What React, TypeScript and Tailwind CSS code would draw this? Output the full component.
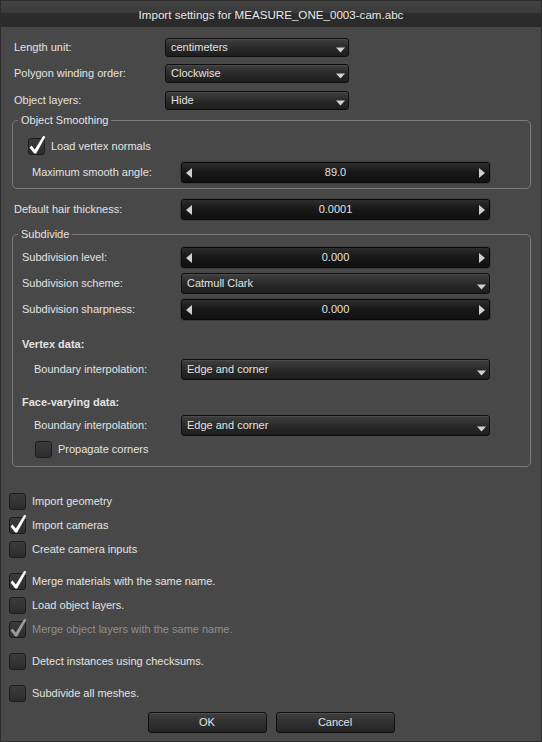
import React from "react";

const TXT = "text-[#e3e3e3]";

function Check({ checked, disabled }: { checked?: boolean; disabled?: boolean }) {
  return (
    <div className="relative w-[17px] h-[17px] shrink-0 rounded-[3px] border border-[#1c1c1c] bg-gradient-to-b from-[#3b3b3b] to-[#2d2d2d]">
      {checked && (
        <svg
          className="absolute left-[-1px] top-[-1px] overflow-visible"
          width="17"
          height="17"
          viewBox="0 0 17 17"
        >
          <path
            d="M1.5 9.5 L3.6 7.6 L6.8 11.6 L15.3 -2.2 L17.4 -1.2 L8.2 15.6 L6.2 15.6 Z"
            fill={disabled ? "#9a9a9a" : "#ffffff"}
          />
        </svg>
      )}
    </div>
  );
}

function CheckRow({
  label,
  checked,
  disabled,
  className = "",
}: {
  label: string;
  checked?: boolean;
  disabled?: boolean;
  className?: string;
}) {
  return (
    <div className={`flex items-center gap-[6px] h-[17px] ${className}`}>
      <Check checked={checked} disabled={disabled} />
      <span className={disabled ? "text-[#8f8f8f]" : TXT}>{label}</span>
    </div>
  );
}

function Dropdown({ value, h = "h-[19px]" }: { value: string; h?: string }) {
  return (
    <div
      className={`flex ${h} rounded-[3px] border border-[#0e0e0e] bg-gradient-to-b from-[#404040] via-[#2a2a2a] to-[#1d1d1d] shadow-[inset_0_1px_0_#4a4a4a]`}
    >
      <span className={`flex-1 pl-[5px] self-center ${TXT}`}>{value}</span>
      <svg className="self-end mb-[3px] mr-[3px]" width="9" height="6" viewBox="0 0 9 6">
        <polygon points="0,0.5 9,0.5 4.5,5.5" fill="#d2d2d2" />
      </svg>
    </div>
  );
}

function Slider({ value }: { value: string }) {
  return (
    <div className="flex items-center h-[21px] rounded-[3px] border border-[#0a0a0a] bg-gradient-to-b from-[#2e2e2e] via-[#171717] to-[#111111] shadow-[0_0_0_1px_#3c3c3c] px-[4px]">
      <svg width="6" height="10" viewBox="0 0 6 10">
        <polygon points="6,0 6,10 0,5" fill="#d0d0d0" />
      </svg>
      <span className={`flex-1 text-center ${TXT}`}>{value}</span>
      <svg width="6" height="10" viewBox="0 0 6 10">
        <polygon points="0,0 0,10 6,5" fill="#d0d0d0" />
      </svg>
    </div>
  );
}

function Button({ label }: { label: string }) {
  return (
    <div
      className={`w-[119px] h-[21px] flex items-center justify-center rounded-[3px] border border-[#101010] bg-gradient-to-b from-[#3e3e3e] to-[#242424] shadow-[inset_0_1px_0_#4c4c4c] ${TXT}`}
    >
      {label}
    </div>
  );
}

export default function App() {
  return (
    <div className="w-[542px] h-[742px] bg-[#484848] border border-[#2c2c2c] flex flex-col font-['Liberation_Sans',Arial,sans-serif] text-[11px] leading-[13px] overflow-hidden">
      {/* title bar */}
      <div className="h-[26px] shrink-0 flex items-center justify-center bg-[linear-gradient(to_bottom,#444444_0%,#3a3a3a_45%,#2c2c2c_46%,#2a2a2a_100%)] text-[11.6px] text-[#e8e8e8]">
        Import settings for MEASURE_ONE_0003-cam.abc
      </div>

      {/* top rows */}
      <div className="grid grid-cols-[151px_184px] items-center pl-[13px] mt-[11px]">
        <span className={TXT}>Length unit:</span>
        <Dropdown value="centimeters" />
      </div>
      <div className="grid grid-cols-[151px_184px] items-center pl-[13px] mt-[7px]">
        <span className={TXT}>Polygon winding order:</span>
        <Dropdown value="Clockwise" />
      </div>
      <div className="grid grid-cols-[151px_184px] items-center pl-[13px] mt-[8px]">
        <span className={TXT}>Object layers:</span>
        <Dropdown value="Hide" />
      </div>

      {/* Object Smoothing */}
      <fieldset className="ml-[11px] mr-[10px] mt-[4px] rounded-[5px] border border-[#7a7a7a] pb-[5px]">
        <legend className={`ml-[5px] px-[3px] ${TXT}`}>Object Smoothing</legend>
        <CheckRow label="Load vertex normals" checked className="pl-[15px] mt-[11px]" />
        <div className="grid grid-cols-[149px_309px] items-center pl-[19px] mt-[7px]">
          <span className={TXT}>Maximum smooth angle:</span>
          <Slider value="89.0" />
        </div>
      </fieldset>

      <div className="grid grid-cols-[167px_309px] items-center pl-[13px] mt-[10px]">
        <span className={TXT}>Default hair thickness:</span>
        <Slider value="0.0001" />
      </div>

      {/* Subdivide */}
      <fieldset className="ml-[11px] mr-[10px] mt-[8px] rounded-[5px] border border-[#7a7a7a] pb-[8px]">
        <legend className={`ml-[5px] px-[3px] ${TXT}`}>Subdivide</legend>
        <div className="grid grid-cols-[159px_309px] items-center pl-[9px] mt-[6px]">
          <span className={TXT}>Subdivision level:</span>
          <Slider value="0.000" />
        </div>
        <div className="grid grid-cols-[159px_309px] items-center pl-[9px] mt-[5px]">
          <span className={TXT}>Subdivision scheme:</span>
          <Dropdown value="Catmull Clark" h="h-[21px]" />
        </div>
        <div className="grid grid-cols-[159px_309px] items-center pl-[9px] mt-[5px]">
          <span className={TXT}>Subdivision sharpness:</span>
          <Slider value="0.000" />
        </div>

        <div className={`pl-[9px] mt-[18px] font-bold ${TXT}`}>Vertex data:</div>
        <div className="grid grid-cols-[147px_309px] items-center pl-[21px] mt-[8px]">
          <span className={TXT}>Boundary interpolation:</span>
          <Dropdown value="Edge and corner" h="h-[21px]" />
        </div>

        <div className={`pl-[9px] mt-[16px] font-bold ${TXT}`}>Face-varying data:</div>
        <div className="grid grid-cols-[147px_309px] items-center pl-[21px] mt-[6px]">
          <span className={TXT}>Boundary interpolation:</span>
          <Dropdown value="Edge and corner" h="h-[21px]" />
        </div>
        <CheckRow label="Propagate corners" className="pl-[22px] mt-[5px]" />
      </fieldset>

      {/* bottom checkboxes */}
      <div className="flex flex-col pl-[8px] mt-[26px]">
        <CheckRow label="Import geometry" />
        <CheckRow label="Import cameras" checked className="mt-[7px]" />
        <CheckRow label="Create camera inputs" className="mt-[7px]" />
        <CheckRow label="Merge materials with the same name." checked className="mt-[15px]" />
        <CheckRow label="Load object layers." className="mt-[7px]" />
        <CheckRow label="Merge object layers with the same name." checked disabled className="mt-[7px]" />
        <CheckRow label="Detect instances using checksums." className="mt-[15px]" />
        <CheckRow label="Subdivide all meshes." className="mt-[15px]" />
      </div>

      <div className="flex justify-center gap-[9px] mt-[10px]">
        <Button label="OK" />
        <Button label="Cancel" />
      </div>
    </div>
  );
}
